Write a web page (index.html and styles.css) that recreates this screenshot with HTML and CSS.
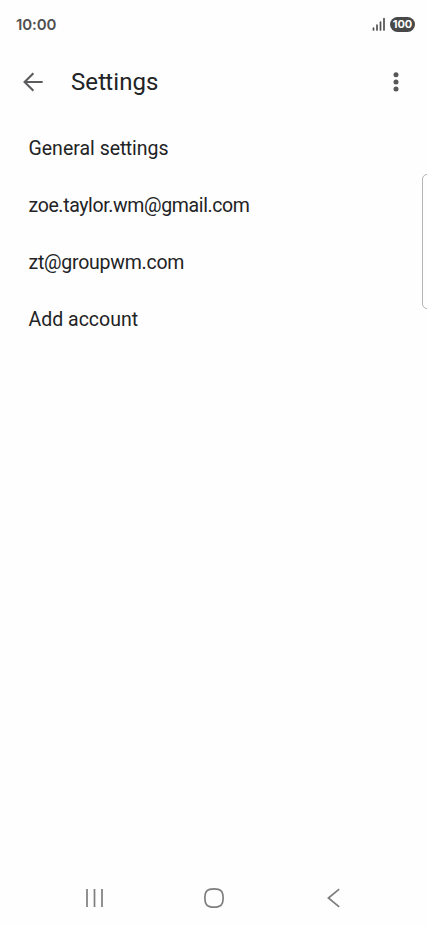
FILE: index.html
```html
<!DOCTYPE html>
<html lang="en">
<head>
<meta charset="utf-8">
<title>Settings</title>
<link rel="stylesheet" href="styles.css">
</head>
<body>
<div class="screen">
  <header class="status">
    <span class="clock">10:00</span>
    <div class="indicators">
      <svg class="signal" width="14" height="14" viewBox="0 0 14 14"><path d="M1.5 11.2V13M5 8.2V13M8.5 5V13M12 1.6V13"/></svg>
      <span class="battery">100</span>
    </div>
  </header>
  <div class="appbar">
    <svg class="back" width="20" height="20" viewBox="0 0 20 20"><path d="M19.7 10H1.8M10.4 1.2L1.6 10L10.4 18.8"/></svg>
    <h1 class="title">Se<span class="tt">t</span>tings</h1>
    <svg class="more" width="6" height="20" viewBox="0 0 6 20"><circle cx="3" cy="2.8" r="2.5"/><circle cx="3" cy="9.9" r="2.5"/><circle cx="3" cy="17" r="2.5"/></svg>
  </div>
  <main class="list">
    <div class="item"><span class="general">General se<span class="tt">t</span>tings</span></div>
    <div class="item"><span class="gmail">zoe.taylor.wm@gmail.com</span></div>
    <div class="item"><span class="work">zt@groupwm.com</span></div>
    <div class="item"><span class="add">Add account</span></div>
  </main>
  <nav class="navbar">
    <svg width="20" height="20" viewBox="0 0 20 20"><path d="M2 1V19M9.5 1V19M17 1V19"/></svg>
    <svg width="20" height="20" viewBox="0 0 20 20"><path d="M10 .9C16.7 .9 19.1 3.3 19.1 10S16.7 19.1 10 19.1 .9 16.7 .9 10 3.3 .9 10 .9Z"/></svg>
    <svg width="20" height="20" viewBox="0 0 20 20"><path d="M16.2 1.2L5.4 10L16.2 18.8"/></svg>
  </nav>
  <div class="edge-handle"></div>
</div>
</body>
</html>
```

FILE: styles.css
```css
* { box-sizing: border-box; }
body { margin: 0; background: #fefefe; font-family: Roboto, sans-serif; color: #222325; }
svg { display: block; flex: none; fill: none; }
.screen { position: relative; width: 427px; height: 926px; overflow: hidden; display: flex; flex-direction: column; }
.status { height: 48px; padding: 0 12px 0 16px; display: flex; align-items: center; justify-content: space-between; }
.clock { padding-top: 1px; font-family: Inter, sans-serif; font-size: 15px; font-weight: 600; line-height: 18px; letter-spacing: -.1px; color: #505050; }
.indicators { display: flex; align-items: center; gap: 4px; }
.signal { stroke: #505050; stroke-width: 1.7; stroke-linecap: round; }
.battery { width: 25px; height: 15px; border-radius: 8px; background: #484848; color: #fff; font: 700 11px/15px Inter, sans-serif; text-align: center; }
.appbar { height: 68px; padding: 0 28px 0 23px; display: flex; align-items: center; }
.back { stroke: #5c5c5e; stroke-width: 2.1; }
.title { margin: 0 auto 0 28px; font-size: 24px; font-weight: 400; line-height: 32px; letter-spacing: .1px; }
.tt { letter-spacing: -.8px; }
.more { fill: #58585a; }
.list { flex: 1; padding: 4px 0 0 28.5px; }
.item { height: 57px; display: flex; align-items: center; font-size: 19.5px; line-height: 26px; white-space: nowrap; }
.gmail { letter-spacing: -.37px; }
.work { letter-spacing: -.24px; }
.navbar { height: 56px; padding: 0 84px 0 85px; display: flex; align-items: center; justify-content: space-between; stroke: #7e7e7e; stroke-width: 1.7; }
.edge-handle { position: absolute; left: 422px; top: 174px; width: 12px; height: 135px; border: 1px solid #b4b4b4; border-radius: 5px; }
```
